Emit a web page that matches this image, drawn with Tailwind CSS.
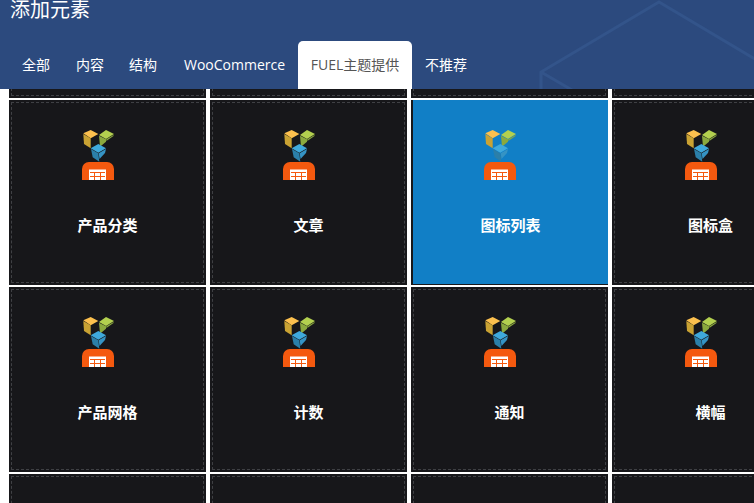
<!doctype html>
<html lang="zh">
<head>
<meta charset="utf-8">
<script src="https://cdn.jsdelivr.net/npm/@tailwindcss/browser@4"></script>
</head>
<body class="bg-white overflow-hidden font-['Open_Sans','Noto_Sans_CJK_SC',sans-serif]">
<svg width="0" height="0" class="absolute">
  <symbol id="el" viewBox="0 0 32 50">
    <polygon points="1.3,3.3 8.7,0 16.3,4 8.7,8.3" fill="#fcc04e"/>
    <polygon points="1.3,4 8.7,8.3 8.7,18.3 2,14" fill="#c9a233"/>
    <polygon points="17,5 24,0 32,4 24,9" fill="#b3d04f"/>
    <polygon points="17,5.7 24,9.3 24,11.7 18,16.7" fill="#8ba93e"/>
    <polygon points="24.3,9.3 31.5,5 31.5,6 24.3,11" fill="#8ba93e"/>
    <polygon points="8.7,18.3 16.3,14 24,18.3 16.3,22.7" fill="#3fa9dc"/>
    <polygon points="9,19 16.3,23.3 17.3,31.7 10.7,27.3" fill="#2b7fa9"/>
    <polygon points="16.7,23.3 24,19 23,23 17.5,29" fill="#3593c4"/>
    <path d="M0 50V39a7 7 0 0 1 7-7h18a7 7 0 0 1 7 7v11z" fill="#f4590f"/>
    <rect x="7" y="39.5" width="17" height="10.5" fill="#fff"/>
    <path d="M8 42.5h15M8 46.5h15M12.5 42v8M18.5 42v8" stroke="#f4590f" fill="none"/>
  </symbol>
</svg>

<div class="w-[754px] h-[503px] overflow-hidden flex flex-col">
  <header class="relative h-[89px] shrink-0 bg-[#2c4a7e] overflow-hidden text-white">
    <svg class="absolute inset-0" width="754" height="89" fill="none" stroke="#33548a" stroke-width="3">
      <path d="M541 89V72L659 2 760 62M541 72 572 90"/>
    </svg>
    <h1 class="relative pl-[10px] text-[20px] leading-[20px] font-normal">添加元素</h1>
    <nav class="relative mt-[21px] flex h-[48px] pl-[10px] text-[14px]">
      <a class="px-3 pt-[13px]">全部</a>
      <a class="pl-[14px] pr-3 pt-[13px]">内容</a>
      <a class="px-[14px] pt-[13px] pl-[13px]">结构</a>
      <a class="pl-[13px] pr-[13px] pt-[13px]">WooCommerce</a>
      <a class="w-[114px] bg-white text-[#555] rounded-t-[5px] pt-[13px] text-center">FUEL主题提供</a>
      <a class="pl-[13px] pt-[13px]">不推荐</a>
    </nav>
  </header>

  <main class="flex-1 overflow-hidden pl-[9px]">
    <div class="-mt-[176px] grid grid-cols-[repeat(4,197px)] auto-rows-[185px] gap-x-[4px] gap-y-[2px] w-[900px] text-white text-[15px] leading-[21px] font-bold text-center">
      <div class="bg-[#17171a] p-[2px]"><div class="h-full border border-dashed border-[#3f4044]"></div></div>
      <div class="bg-[#17171a] p-[2px]"><div class="h-full border border-dashed border-[#3f4044]"></div></div>
      <div class="bg-[#17171a] p-[2px]"><div class="h-full border border-dashed border-[#3f4044]"></div></div>
      <div class="bg-[#17171a] p-[2px]"><div class="h-full border border-dashed border-[#3f4044]"></div></div>

      <div class="bg-[#17171a] p-[2px]"><div class="h-full border border-dashed border-[#3f4044] pt-[27px]">
        <svg class="ml-[70px] w-[32px] h-[50px]"><use href="#el"/></svg><p class="mt-[35px]">产品分类</p></div></div>
      <div class="bg-[#17171a] p-[2px]"><div class="h-full border border-dashed border-[#3f4044] pt-[27px]">
        <svg class="ml-[70px] w-[32px] h-[50px]"><use href="#el"/></svg><p class="mt-[35px]">文章</p></div></div>
      <div class="bg-[#17171a] pl-[2px] pb-[1px]"><div class="h-full bg-[#117fc6] pt-[30px]">
        <svg class="ml-[71px] w-[32px] h-[50px]"><use href="#el"/></svg><p class="mt-[35px]">图标列表</p></div></div>
      <div class="bg-[#17171a] p-[2px]"><div class="h-full border border-dashed border-[#3f4044] pt-[27px]">
        <svg class="ml-[70px] w-[32px] h-[50px]"><use href="#el"/></svg><p class="mt-[35px]">图标盒</p></div></div>

      <div class="bg-[#17171a] p-[2px]"><div class="h-full border border-dashed border-[#3f4044] pt-[27px]">
        <svg class="ml-[70px] w-[32px] h-[50px]"><use href="#el"/></svg><p class="mt-[35px]">产品网格</p></div></div>
      <div class="bg-[#17171a] p-[2px]"><div class="h-full border border-dashed border-[#3f4044] pt-[27px]">
        <svg class="ml-[70px] w-[32px] h-[50px]"><use href="#el"/></svg><p class="mt-[35px]">计数</p></div></div>
      <div class="bg-[#17171a] p-[2px]"><div class="h-full border border-dashed border-[#3f4044] pt-[27px]">
        <svg class="ml-[70px] w-[32px] h-[50px]"><use href="#el"/></svg><p class="mt-[35px]">通知</p></div></div>
      <div class="bg-[#17171a] p-[2px]"><div class="h-full border border-dashed border-[#3f4044] pt-[27px]">
        <svg class="ml-[70px] w-[32px] h-[50px]"><use href="#el"/></svg><p class="mt-[35px]">横幅</p></div></div>

      <div class="bg-[#17171a] p-[2px]"><div class="h-full border border-dashed border-[#3f4044]"></div></div>
      <div class="bg-[#17171a] p-[2px]"><div class="h-full border border-dashed border-[#3f4044]"></div></div>
      <div class="bg-[#17171a] p-[2px]"><div class="h-full border border-dashed border-[#3f4044]"></div></div>
      <div class="bg-[#17171a] p-[2px]"><div class="h-full border border-dashed border-[#3f4044]"></div></div>
    </div>
  </main>
</div>
</body>
</html>
